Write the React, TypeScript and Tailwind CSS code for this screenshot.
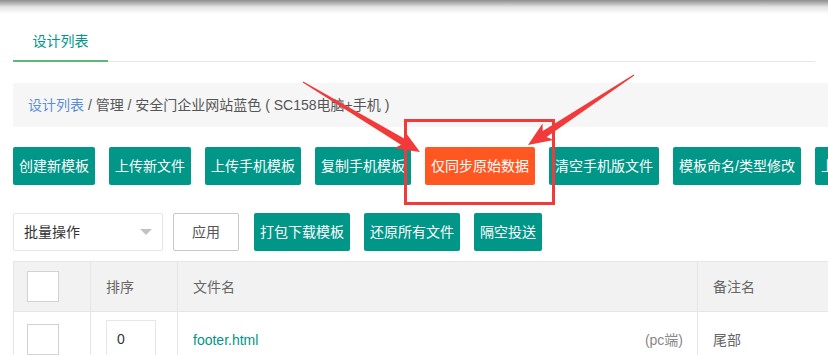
import React from 'react'

const topButtons = [
  { label: '创建新模板' },
  { label: '上传新文件' },
  { label: '上传手机模板' },
  { label: '复制手机模板' },
  { label: '仅同步原始数据', warm: true },
  { label: '清空手机版文件' },
  { label: '模板命名/类型修改' },
  { label: '上传新模板' },
]

const toolButtons = ['打包下载模板', '还原所有文件', '隔空投送']

type Pt = [number, number]

// tapered arrow polygon from tail to tip
const arrowPoints = (tail: Pt, tip: Pt) => {
  const dx = tip[0] - tail[0]
  const dy = tip[1] - tail[1]
  const len = Math.hypot(dx, dy)
  const ux = dx / len
  const uy = dy / len
  const nx = -uy
  const ny = ux
  const headLen = 24
  const bx = tip[0] - ux * headLen
  const by = tip[1] - uy * headLen
  const pts: Pt[] = [
    [tail[0] + nx * 0.6, tail[1] + ny * 0.6],
    [bx + ux * 4 + nx * 3.5, by + uy * 4 + ny * 3.5],
    [bx + nx * 10, by + ny * 10],
    tip,
    [bx - nx * 10, by - ny * 10],
    [bx + ux * 4 - nx * 3.5, by + uy * 4 - ny * 3.5],
    [tail[0] - nx * 0.6, tail[1] - ny * 0.6],
  ]
  return pts.map((p) => p.join(',')).join(' ')
}

const Checkbox = () => (
  <div className="h-[31px] w-[32px] border border-[#d2d2d2] bg-white" />
)

export default function App() {
  return (
    <div className="relative h-[355px] w-[828px] overflow-hidden bg-white font-['Liberation_Sans','Noto_Sans_CJK_SC',sans-serif] text-sm text-[#666]">
      <div className="h-[14px] bg-gradient-to-b from-[#8e8e8e] via-[#e4e4e4] to-white" />

      <div className="px-[13px]">
        {/* tab */}
        <div className="mt-[8px] flex h-[40px] border-b border-[#e6e6e6]">
          <div className="-mb-px flex w-[95px] items-center justify-center border-b-2 border-[#5FB878] text-[#009688]">
            设计列表
          </div>
        </div>

        {/* breadcrumb */}
        <div className="mt-[21px] flex h-[44px] w-[900px] items-center bg-[#f6f6f6] px-[15px] text-[#555]">
          <span className="text-[#5b8fd2]">设计列表</span>
          <span className="whitespace-pre"> / 管理 / 安全门企业网站蓝色 ( SC158电脑+手机 )</span>
        </div>

        {/* action buttons */}
        <div className="mt-[20px] flex gap-[14px] whitespace-nowrap">
          {topButtons.map((b) => (
            <div
              key={b.label}
              className={`flex h-[38px] shrink-0 items-center rounded-[2px] px-[6px] text-white ${
                b.warm ? 'bg-[#FF5722]' : 'bg-[#009688]'
              }`}
            >
              {b.label}
            </div>
          ))}
        </div>

        {/* bulk row */}
        <div className="mt-[28px] flex items-center whitespace-nowrap">
          <div className="flex h-[38px] w-[150px] items-center justify-between rounded-[2px] border border-[#e6e6e6] pl-[10px] pr-[10px] text-[#333]">
            <span>批量操作</span>
            <span className="h-0 w-0 border-x-[6px] border-t-[6px] border-x-transparent border-t-[#c2c2c2]" />
          </div>
          <div className="ml-[10px] flex h-[38px] w-[66px] items-center justify-center rounded-[2px] border border-[#c9c9c9] text-[#555]">
            应用
          </div>
          <div className="ml-[15px] flex gap-[14px]">
            {toolButtons.map((t) => (
              <div
                key={t}
                className="flex h-[38px] items-center rounded-[2px] bg-[#009688] px-[6px] text-white"
              >
                {t}
              </div>
            ))}
          </div>
        </div>

        {/* table */}
        <div className="mt-[10px] w-[900px] border-l border-t border-[#e6e6e6]">
          <div className="grid h-[50px] grid-cols-[77px_87px_520px_1fr] border-b border-[#e6e6e6] bg-[#f2f2f2]">
            <div className="flex items-center border-r border-[#e6e6e6] pl-[13px]">
              <Checkbox />
            </div>
            <div className="flex items-center border-r border-[#e6e6e6] pl-[15px]">排序</div>
            <div className="flex items-center border-r border-[#e6e6e6] pl-[15px]">文件名</div>
            <div className="flex items-center pl-[15px]">备注名</div>
          </div>
          <div className="grid h-[60px] grid-cols-[77px_87px_520px_1fr] items-start">
            <div className="h-full border-r border-[#e6e6e6] pl-[13px] pt-[12px]">
              <Checkbox />
            </div>
            <div className="h-full border-r border-[#e6e6e6] pl-[15px] pt-[8px]">
              <div className="flex h-[38px] w-[50px] items-center border border-[#e6e6e6] pl-[10px] text-[#333]">
                0
              </div>
            </div>
            <div className="flex h-full items-start justify-between border-r border-[#e6e6e6] pl-[15px] pr-[14px] pt-[18px]">
              <span className="text-[#009688]">footer.html</span>
              <span className="text-[#888]">(pc端)</span>
            </div>
            <div className="pl-[15px] pt-[18px]">尾部</div>
          </div>
        </div>
      </div>

      {/* annotation overlay */}
      <div className="pointer-events-none absolute left-[404px] top-[119px] h-[86px] w-[151px] border-[3px] border-[#f23a3a]" />
      <svg className="pointer-events-none absolute left-0 top-0" width="828" height="355">
        <polygon points={arrowPoints([303, 82], [420, 152])} fill="#f23a3a" />
        <polygon points={arrowPoints([634, 75], [528, 145])} fill="#f23a3a" />
      </svg>
    </div>
  )
}
